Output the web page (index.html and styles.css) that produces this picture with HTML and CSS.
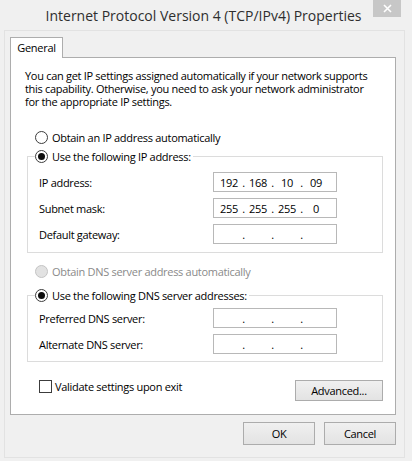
FILE: index.html
```html
<!DOCTYPE html>
<html>
<head>
<meta charset="utf-8">
<title>Internet Protocol Version 4 (TCP/IPv4) Properties</title>
<link rel="stylesheet" href="styles.css">
</head>
<body>
<div class="window">
  <div class="titlebar">
    <span class="spacer"></span>
    <span class="title">Internet Protocol Version 4 (TCP/IPv4) Properties</span>
    <span class="close"><svg width="9" height="9" viewBox="0 0 9 9"><path d="M1 1L8 8M8 1L1 8" stroke="#fff" stroke-width="1.6" fill="none"/></svg></span>
  </div>
  <div class="client">
    <div class="tabs"><div class="tab">General</div></div>
    <div class="panel">
      <p class="intro">You can get IP settings assigned automatically if your network supports<br>this capability. Otherwise, you need to ask your network administrator<br>for the appropriate IP settings.</p>

      <div class="radio-row first"><span class="radio"></span><span>Obtain an IP address automatically</span></div>

      <fieldset class="group group-ip">
        <legend class="legend"><span class="radio checked"></span><span>Use the following IP address:</span></legend>
        <div class="field-row">
          <span class="field-label">IP address:</span>
          <div class="ipbox"><span class="seg">192</span><span class="dot">.</span><span class="seg">168</span><span class="dot">.</span><span class="seg">10</span><span class="dot">.</span><span class="seg">09</span></div>
        </div>
        <div class="field-row">
          <span class="field-label">Subnet mask:</span>
          <div class="ipbox"><span class="seg">255</span><span class="dot">.</span><span class="seg">255</span><span class="dot">.</span><span class="seg">255</span><span class="dot">.</span><span class="seg">0</span></div>
        </div>
        <div class="field-row">
          <span class="field-label">Default gateway:</span>
          <div class="ipbox"><span class="seg"></span><span class="dot">.</span><span class="seg"></span><span class="dot">.</span><span class="seg"></span><span class="dot">.</span><span class="seg"></span></div>
        </div>
      </fieldset>

      <div class="radio-row disabled"><span class="radio"></span><span>Obtain DNS server address automatically</span></div>

      <fieldset class="group group-dns">
        <legend class="legend"><span class="radio checked"></span><span>Use the following DNS server addresses:</span></legend>
        <div class="field-row">
          <span class="field-label">Preferred DNS server:</span>
          <div class="ipbox"><span class="seg"></span><span class="dot">.</span><span class="seg"></span><span class="dot">.</span><span class="seg"></span><span class="dot">.</span><span class="seg"></span></div>
        </div>
        <div class="field-row">
          <span class="field-label">Alternate DNS server:</span>
          <div class="ipbox"><span class="seg"></span><span class="dot">.</span><span class="seg"></span><span class="dot">.</span><span class="seg"></span><span class="dot">.</span><span class="seg"></span></div>
        </div>
      </fieldset>

      <div class="bottom-row">
        <div class="check-row"><span class="checkbox"></span><span>Validate settings upon exit</span></div>
        <div class="btn btn-adv">Advanced...</div>
      </div>
    </div>
    <div class="footer">
      <div class="btn btn-main">OK</div>
      <div class="btn btn-main">Cancel</div>
    </div>
  </div>
</div>
</body>
</html>
```

FILE: styles.css
```css
* { box-sizing: border-box; }
html, body {
  margin: 0;
  padding: 0;
  background: #f7f7f7;
}
body {
  width: 412px;
  height: 461px;
  overflow: hidden;
  font-family: "Open Sans", "Noto Sans", "DejaVu Sans", sans-serif;
  font-size: 11px;
  letter-spacing: -0.3px;
  color: #000;
}
.window {
  width: 412px;
  height: 461px;
  background: #f0f0f0;
  display: flex;
  flex-direction: column;
}
.titlebar {
  height: 30px;
  display: grid;
  grid-template-columns: 1fr auto 1fr;
  padding-right: 5px;
}
.title {
  font-size: 14px;
  letter-spacing: 0;
  color: #2e2e2e;
  line-height: 30px;
  padding-top: 1px;
  white-space: nowrap;
}
.close {
  justify-self: end;
  align-self: start;
  width: 28px;
  height: 17px;
  margin-right: 6px;
  background: #c7c7c7;
  display: flex;
  align-items: center;
  justify-content: center;
}
.close svg { display: block; }
.client {
  flex: 1;
  margin: 0 7px 3px 4px;
  border: 1px solid #e2e2e2;
  padding: 6px 0 0 5px;
  display: flex;
  flex-direction: column;
}
.tabs {
  display: flex;
  height: 20px;
}
.tab {
  width: 53px;
  height: 21px;
  background: #fff;
  border: 1px solid #adadad;
  border-bottom: none;
  position: relative;
  z-index: 1;
  text-align: center;
  line-height: 18px;
  padding-top: 1px;
}
.panel {
  width: 386px;
  height: 358px;
  background: #fff;
  border: 1px solid #adadad;
  padding: 11px 12px 0 14px;
  display: flex;
  flex-direction: column;
}
.intro {
  margin: 0;
  line-height: 13px;
  white-space: nowrap;
}
.radio-row {
  display: flex;
  align-items: center;
  height: 16px;
  padding-left: 10px;
  gap: 4px;
  white-space: nowrap;
}
.radio-row.first { margin-top: 21px; }
.radio {
  width: 13px;
  height: 13px;
  border-radius: 50%;
  border: 1px solid #3c3c3c;
  background: #fff;
  display: flex;
  align-items: center;
  justify-content: center;
  flex: none;
}
.radio.checked::after {
  content: "";
  width: 7px;
  height: 7px;
  border-radius: 50%;
  background: #0d0d0d;
}
.radio-row.disabled { color: #8a8a8a; margin-top: 10px; }
.radio-row.disabled .radio {
  border-color: #c4c4c4;
  background: #e2e2e2;
}
.group {
  margin: 3px 0 0 2px;
  border: 1px solid #dcdcdc;
  padding: 8px 0 8px 0;
  min-width: 0;
  display: flex;
  flex-direction: column;
  gap: 6px;
}
.group-dns { margin-top: 8px; padding-top: 5px; padding-bottom: 7px; }
.legend {
  display: flex;
  align-items: center;
  height: 16px;
  gap: 4px;
  padding: 0 2px 0 0;
  margin-left: 7px;
  white-space: nowrap;
}
.field-row {
  display: flex;
  align-items: center;
  height: 20px;
  padding-left: 11px;
}
.field-label {
  width: 174px;
  flex: none;
  white-space: nowrap;
}
.ipbox {
  width: 124px;
  height: 20px;
  border: 1px solid #b8b8b8;
  background: #fff;
  display: flex;
  align-items: center;
  padding-left: 4px;
}
.seg {
  width: 22px;
  text-align: center;
}
.dot {
  width: 7px;
  text-align: center;
}
.bottom-row {
  display: flex;
  justify-content: space-between;
  align-items: flex-start;
  margin-top: 17px;
  padding-left: 14px;
}
.check-row {
  display: flex;
  align-items: center;
  gap: 3px;
  height: 14px;
  white-space: nowrap;
}
.checkbox {
  width: 13px;
  height: 13px;
  border: 1px solid #3c3c3c;
  background: #fff;
  flex: none;
}
.btn {
  background: linear-gradient(#f0f0f0, #e3e3e3);
  border: 1px solid #acacac;
  display: flex;
  align-items: center;
  justify-content: center;
  white-space: nowrap;
}
.btn-adv {
  width: 88px;
  height: 21px;
  margin-top: 1px;
}
.footer {
  display: flex;
  justify-content: flex-end;
  gap: 9px;
  width: 386px;
  margin-top: 7px;
}
.btn-main {
  width: 72px;
  height: 23px;
}
```
